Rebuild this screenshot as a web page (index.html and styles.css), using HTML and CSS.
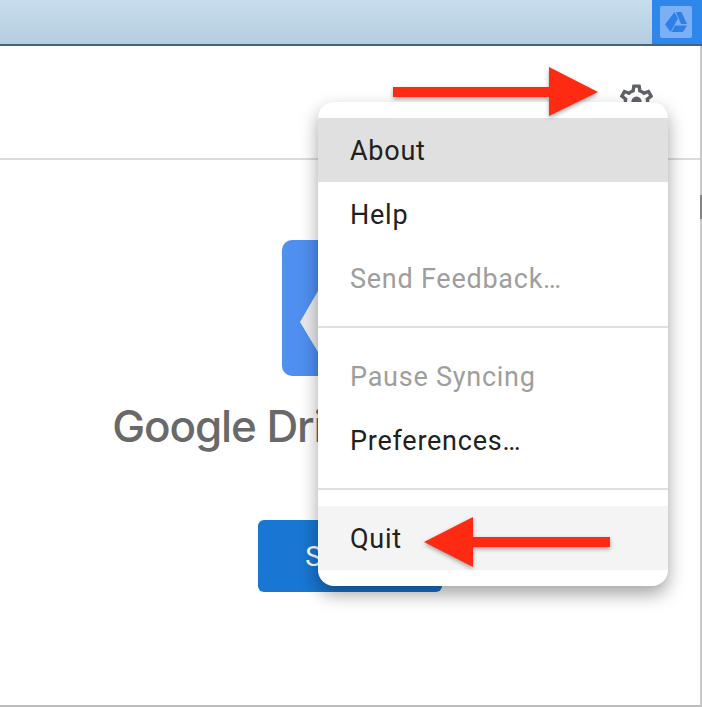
FILE: index.html
```html
<!DOCTYPE html>
<html lang="en">
<head>
<meta charset="utf-8">
<title>Google Drive</title>
<link rel="stylesheet" href="styles.css">
</head>
<body>
<div class="menubar">
  <div class="tray">
    <div class="tray-tile">
      <svg class="tray-glyph" viewBox="0 0 32 32"><path d="M14.5 6 18 12.5 10.5 26 5 18.5zM16 6h5.5L27 18h-6zM11.5 26H23l4-6.5H15z"/></svg>
    </div>
  </div>
</div>
<main class="window">
  <header class="header">
    <svg class="gear" viewBox="0 0 24 24"><path d="M19.43 12.98c.04-.32.07-.64.07-.98 0-.34-.03-.66-.07-.98l2.11-1.65c.19-.15.24-.42.12-.64l-2-3.46c-.09-.16-.26-.25-.44-.25-.06 0-.12.01-.17.03l-2.49 1c-.52-.4-1.08-.73-1.69-.98l-.38-2.65C14.46 2.18 14.25 2 14 2h-4c-.25 0-.46.18-.49.42l-.38 2.65c-.61.25-1.17.59-1.69.98l-2.49-1c-.06-.02-.12-.03-.18-.03-.17 0-.34.09-.43.25l-2 3.46c-.13.22-.07.49.12.64l2.11 1.65c-.04.32-.07.65-.07.98 0 .33.03.66.07.98l-2.11 1.65c-.19.15-.24.42-.12.64l2 3.46c.09.16.26.25.44.25.06 0 .12-.01.17-.03l2.49-1c.52.4 1.08.73 1.69.98l.38 2.65c.03.24.24.42.49.42h4c.25 0 .46-.18.49-.42l.38-2.65c.61-.25 1.17-.59 1.69-.98l2.49 1c.06.02.12.03.18.03.17 0 .34-.09.43-.25l2-3.46c.12-.22.07-.49-.12-.64l-2.11-1.65zm-1.98-1.71c.04.31.05.52.05.73 0 .21-.02.43-.05.73l-.14 1.13.89.7 1.08.84-.7 1.21-1.27-.51-1.04-.42-.9.68c-.43.32-.84.56-1.25.73l-1.06.43-.16 1.13-.2 1.35h-1.4l-.19-1.35-.16-1.13-1.06-.43c-.43-.18-.83-.41-1.23-.71l-.91-.7-1.06.43-1.27.51-.7-1.21 1.08-.84.89-.7-.14-1.13c-.03-.31-.05-.54-.05-.74s.02-.43.05-.73l.14-1.13-.89-.7-1.08-.84.7-1.21 1.27.51 1.04.42.9-.68c.43-.32.84-.56 1.25-.73l1.06-.43.16-1.13.2-1.35h1.39l.19 1.35.16 1.13 1.06.43c.43.18.83.41 1.23.71l.91.7 1.06-.43 1.27-.51.7 1.21-1.07.85-.89.7.14 1.13z"/><circle cx="12" cy="12" r="3"/></svg>
  </header>
  <section class="content">
    <div class="app-icon">
      <svg class="app-glyph" viewBox="0 0 136 136"><path d="M18 82 54 20h28l36 62-18 30H36z"/></svg>
    </div>
    <h1 class="title">Google Drive File Stream</h1>
    <button class="signin">Sign In</button>
  </section>
</main>
<div class="behind"></div>
<nav class="menu">
  <div class="item hovered">About</div>
  <div class="item">Help</div>
  <div class="item disabled">Send Feedback…</div>
  <div class="divider"></div>
  <div class="item disabled">Pause Syncing</div>
  <div class="item">Preferences…</div>
  <div class="divider"></div>
  <div class="item active">Quit</div>
</nav>
<svg class="arrows" viewBox="0 0 702 708">
  <path d="M393 87H549V67L598 92 549 116V97H393z"/>
  <path d="M610 537H473V517L424 542 473 567V547H610z"/>
</svg>
</body>
</html>
```
FILE: styles.css
```css
* { box-sizing: border-box; }
html, body { margin: 0; height: 100%; }
body {
  width: 702px;
  height: 708px;
  overflow: hidden;
  position: relative;
  background: #fff;
  font-family: Roboto, "Liberation Sans", sans-serif;
  display: flex;
  flex-direction: column;
}
.menubar {
  height: 46px;
  flex: none;
  background: linear-gradient(#c7ddec, #b5cde0);
  border-bottom: 2px solid #456484;
  display: flex;
  justify-content: flex-end;
}
.tray {
  width: 50px;
  height: 44px;
  background: #2f87ee;
  display: flex;
  align-items: center;
  justify-content: center;
  padding-right: 2px;
}
.tray-tile {
  width: 32px;
  height: 32px;
  border-radius: 2px;
  background: #7cb0f4;
}
.tray-glyph { display: block; width: 32px; height: 32px; fill: #2f7fe8; }
.window {
  width: 702px;
  height: 661px;
  flex: none;
  background: #fff;
  border-right: 2px solid #c8c8c8;
  border-bottom: 2px solid #bdbdbd;
  display: flex;
  flex-direction: column;
}
.header {
  height: 114px;
  flex: none;
  border-bottom: 2px solid #dcdcdc;
  display: flex;
  justify-content: flex-end;
  padding: 35px 43px 0 0;
}
.gear { width: 41px; height: 41px; fill: #5f6368; }
.content {
  flex: 1;
  display: flex;
  flex-direction: column;
  align-items: center;
  padding-top: 80px;
}
.app-icon {
  width: 136px;
  height: 136px;
  border-radius: 10px;
  background: #4f8ff0;
}
.app-glyph { display: block; width: 136px; height: 136px; fill: #e8eaed; }
.title {
  margin: 22px 0 0;
  padding-left: 18px;
  font-family: Inter, Roboto, sans-serif;
  font-size: 44px;
  letter-spacing: -1.1px;
  line-height: 56px;
  font-weight: 450;
  color: #696969;
  white-space: nowrap;
}
.signin {
  margin-top: 66px;
  width: 184px;
  height: 72px;
  border: 0;
  border-radius: 6px;
  background: #1976d2;
  color: #fff;
  font-family: Roboto, sans-serif;
  font-size: 28px;
  letter-spacing: .7px;
}
.behind {
  position: absolute;
  left: 700px;
  top: 195px;
  width: 2px;
  height: 24px;
  background: #666;
  opacity: .7;
}
.menu {
  position: absolute;
  left: 318px;
  top: 102px;
  width: 350px;
  height: 484px;
  padding: 16px 0;
  background: #fff;
  border-radius: 16px;
  box-shadow: 0 8px 18px rgba(0, 0, 0, .36);
}
.item {
  height: 64px;
  padding: 2px 0 0 32px;
  display: flex;
  align-items: center;
  font-size: 27px;
  letter-spacing: .75px;
  color: #212121;
}
.hovered { background: #e0e0e0; }
.active { background: #f4f4f4; }
.disabled { color: #9e9e9e; }
.divider {
  height: 2px;
  margin: 16px 0;
  background: #e0e0e0;
}
.arrows {
  position: absolute;
  left: 0;
  top: 0;
  width: 702px;
  height: 708px;
  fill: #ff2a12;
  filter: drop-shadow(0 2px 2px rgba(0, 0, 0, .35));
  pointer-events: none;
}
```
